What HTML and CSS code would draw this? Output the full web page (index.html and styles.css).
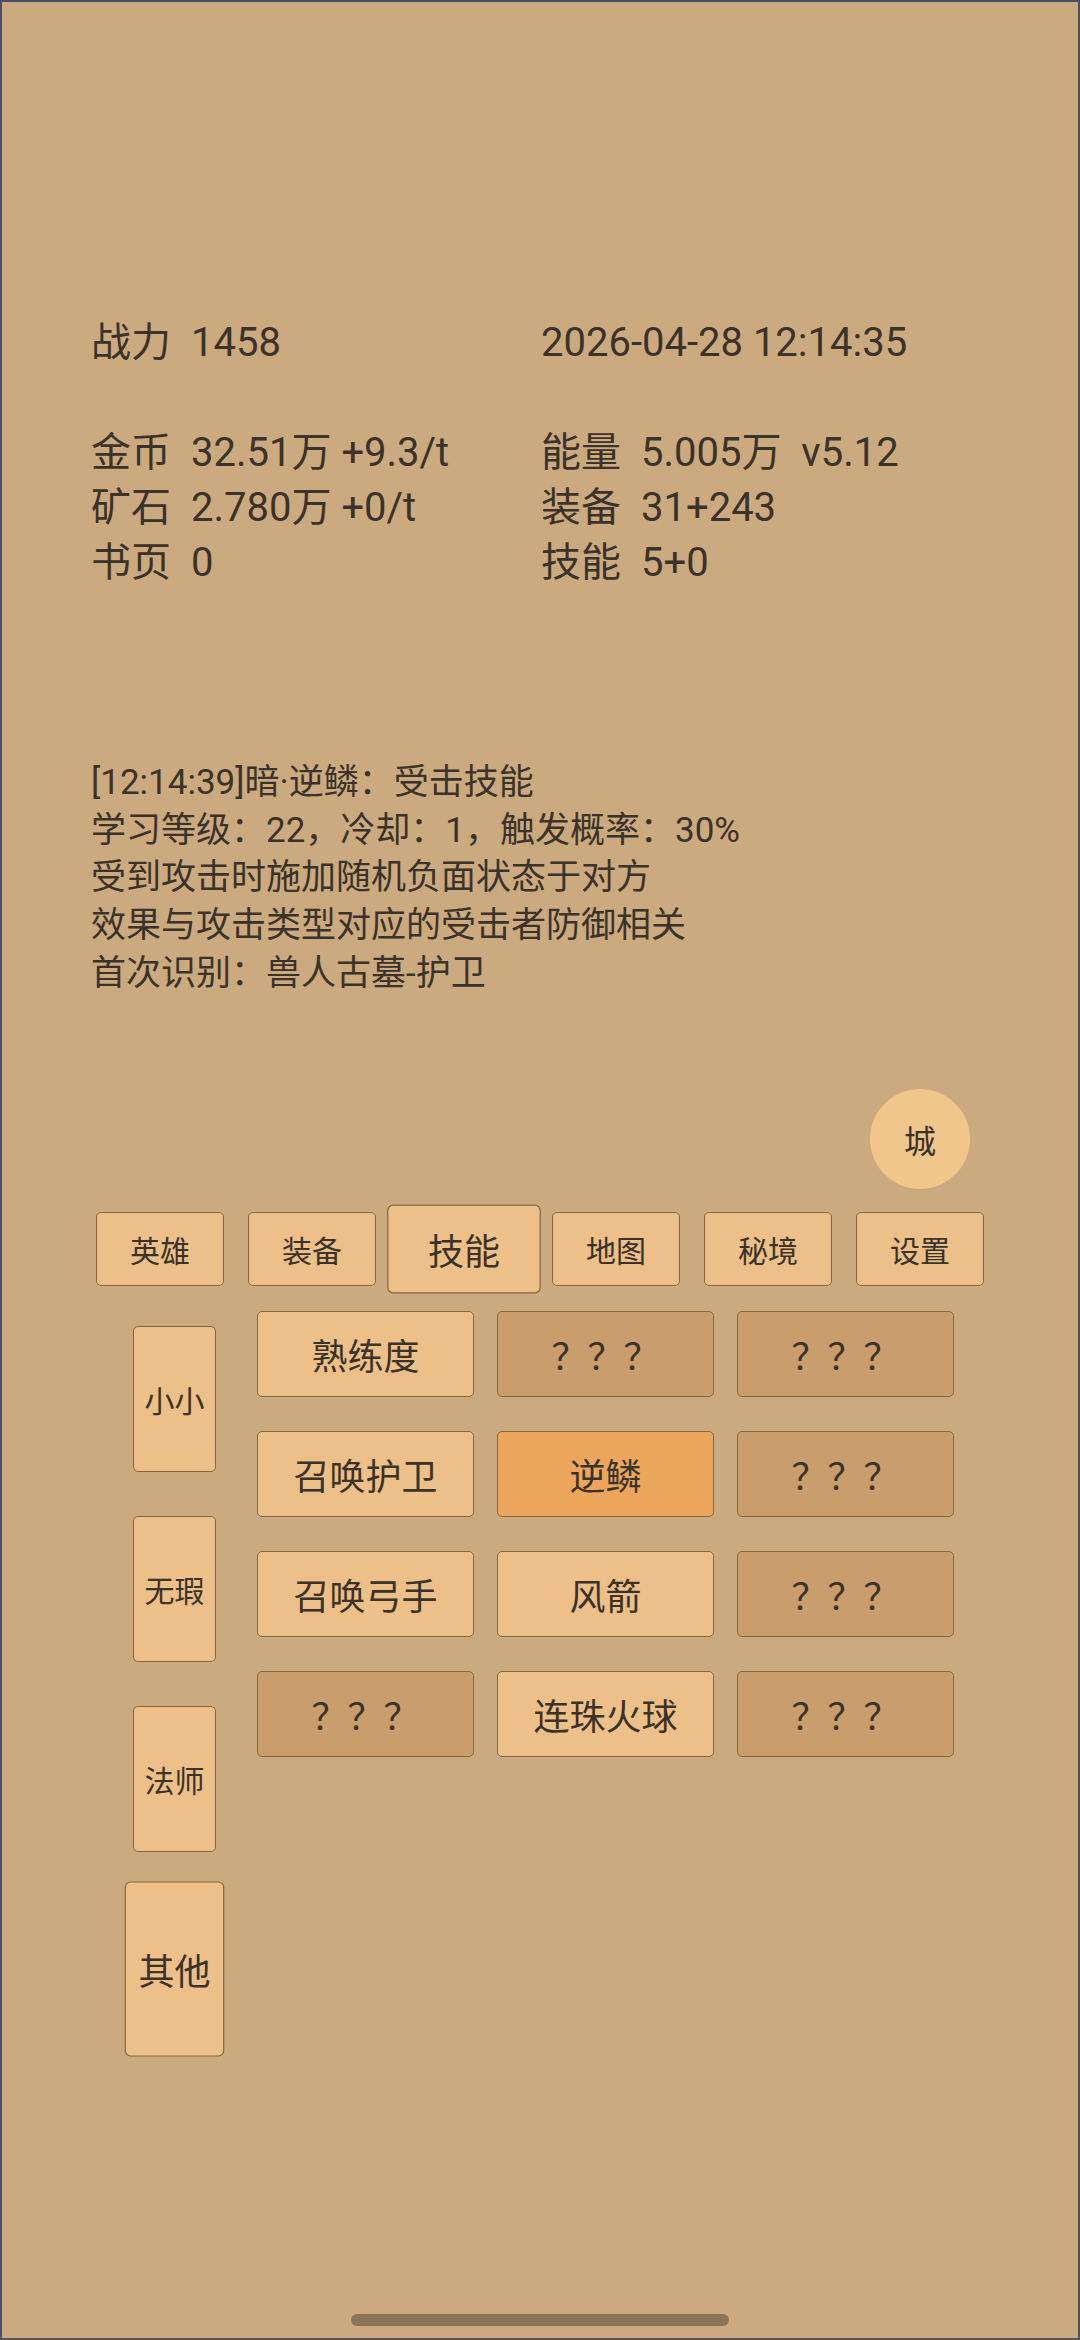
FILE: index.html
```html
<!DOCTYPE html>
<html lang="zh-CN">
<head>
<meta charset="utf-8">
<title>技能</title>
<link rel="stylesheet" href="styles.css">
</head>
<body>
<div class="screen">
  <section class="stats">
    <div class="stat-row">
      <div class="stat"><span class="k">战力</span>1458</div>
      <div class="stat">2026-04-28 12:14:35</div>
    </div>
    <div class="stat-row"></div>
    <div class="stat-row">
      <div class="stat"><span class="k">金币</span>32.51万 +9.3/t</div>
      <div class="stat"><span class="k">能量</span>5.005万  v5.12</div>
    </div>
    <div class="stat-row">
      <div class="stat"><span class="k">矿石</span>2.780万 +0/t</div>
      <div class="stat"><span class="k">装备</span>31+243</div>
    </div>
    <div class="stat-row">
      <div class="stat"><span class="k">书页</span>0</div>
      <div class="stat"><span class="k">技能</span>5+0</div>
    </div>
  </section>

  <section class="log">
    <p>[12:14:39]暗·逆鳞：受击技能</p>
    <p>学习等级：22，冷却：1，触发概率：30%</p>
    <p>受到攻击时施加随机负面状态于对方</p>
    <p>效果与攻击类型对应的受击者防御相关</p>
    <p>首次识别：兽人古墓-护卫</p>
  </section>

  <div class="city-row"><div class="city">城</div></div>

  <nav class="tabs">
    <div class="btn tab">英雄</div>
    <div class="btn tab">装备</div>
    <div class="btn tab selected">技能</div>
    <div class="btn tab">地图</div>
    <div class="btn tab">秘境</div>
    <div class="btn tab">设置</div>
  </nav>

  <div class="main">
    <div class="side">
      <div class="btn side-btn">小小</div>
      <div class="btn side-btn">无瑕</div>
      <div class="btn side-btn">法师</div>
      <div class="btn side-btn selected">其他</div>
    </div>
    <div class="grid">
      <div class="btn cell">熟练度</div>
      <div class="btn cell locked">？？？</div>
      <div class="btn cell locked">？？？</div>
      <div class="btn cell">召唤护卫</div>
      <div class="btn cell active">逆鳞</div>
      <div class="btn cell locked">？？？</div>
      <div class="btn cell">召唤弓手</div>
      <div class="btn cell">风箭</div>
      <div class="btn cell locked">？？？</div>
      <div class="btn cell locked">？？？</div>
      <div class="btn cell">连珠火球</div>
      <div class="btn cell locked">？？？</div>
    </div>
  </div>

  <div class="home-bar"></div>
</div>
</body>
</html>
```

FILE: styles.css
```css
html, body {
  margin: 0;
  padding: 0;
  background: #cbaa80;
}

.screen {
  box-sizing: border-box;
  width: 1080px;
  height: 2340px;
  border: 2px solid #4b4e69;
  border-bottom-color: #55565c;
  background: #cbaa80;
  color: #3b3229;
  font-family: Roboto, "Noto Sans CJK SC", sans-serif;
  display: flex;
  flex-direction: column;
}

/* stats */
.stats {
  margin: 313px 0 0 89px;
  font-size: 40px;
}
.stat-row {
  display: grid;
  grid-template-columns: 450px 450px;
  height: 55px;
  line-height: 55px;
}
.stat {
  white-space: pre;
}
.k {
  margin-right: 20px;
}

/* log */
.log {
  margin: 169px 0 0 89px;
  font-size: 35px;
  line-height: 47.7px;
}
.log p {
  margin: 0;
  white-space: nowrap;
}

/* city */
.city-row {
  margin-top: 91px;
  padding-left: 868px;
}
.city {
  width: 100px;
  height: 100px;
  border-radius: 50%;
  background: #f0c68a;
  display: flex;
  align-items: center;
  justify-content: center;
  font-size: 32px;
}

/* generic button */
.btn {
  box-sizing: border-box;
  background: #ecc088;
  border: 1px solid #86663d;
  border-radius: 5px;
  display: flex;
  align-items: center;
  justify-content: center;
  white-space: nowrap;
}
.btn.selected {
  transform: scale(1.2);
}

/* tabs */
.tabs {
  margin: 23px 0 0 94px;
  display: flex;
  gap: 24px;
}
.tab {
  width: 128px;
  height: 74px;
  font-size: 30px;
}

/* main */
.main {
  margin: 25px 0 0 131px;
  display: flex;
  align-items: flex-start;
}
.side {
  width: 83px;
  padding-top: 15px;
  display: flex;
  flex-direction: column;
  gap: 44px;
}
.side-btn {
  width: 83px;
  height: 146px;
  font-size: 30px;
}
.grid {
  margin-left: 41px;
  display: grid;
  grid-template-columns: repeat(3, 217px);
  grid-auto-rows: 86px;
  column-gap: 23px;
  row-gap: 34px;
}
.cell {
  font-size: 36px;
}
.cell.locked {
  background: #c99e6c;
}
.cell.active {
  background: #eba65c;
}

/* home indicator */
.home-bar {
  margin-top: auto;
  margin-bottom: 12px;
  align-self: center;
  width: 378px;
  height: 12px;
  border-radius: 6px;
  background: #8b7557;
}
```
